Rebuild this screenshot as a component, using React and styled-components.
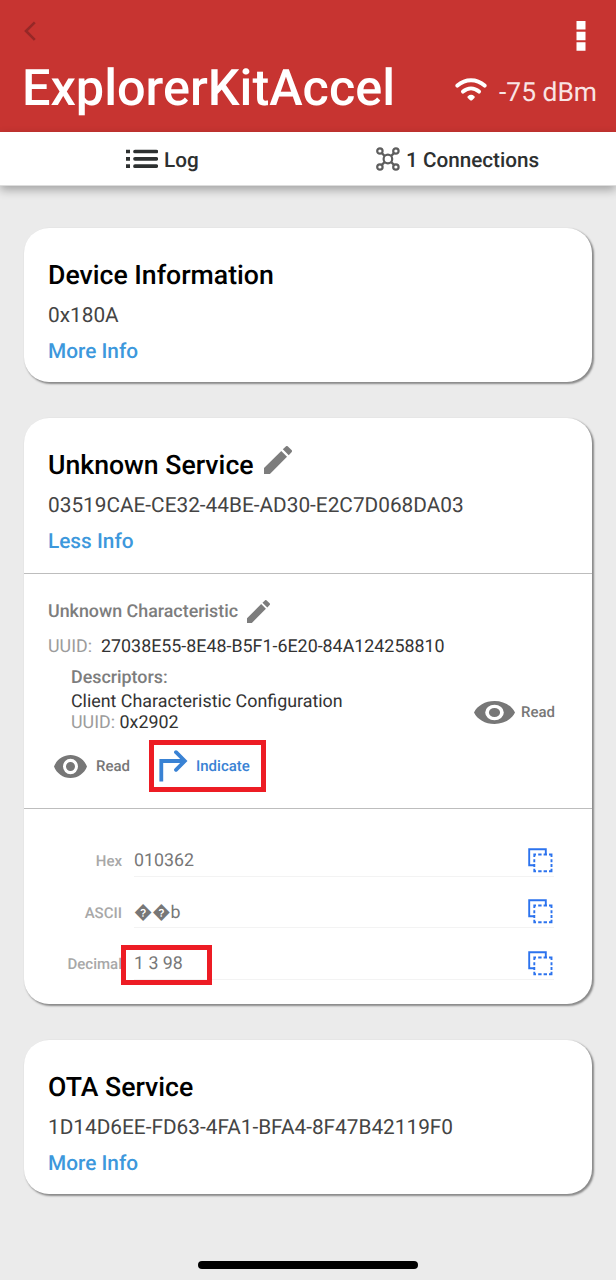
import React from "react";
import styled, { createGlobalStyle } from "styled-components";

const GlobalStyle = createGlobalStyle`
  * { box-sizing: border-box; }
  body {
    margin: 0;
    background: #ebebeb;
    font-family: Roboto, "Liberation Sans", sans-serif;
    text-rendering: geometricPrecision;
  }
  svg { display: block; flex: none; }
`;

const Screen = styled.div`
  width: 616px;
  height: 1280px;
  overflow: hidden;
  display: flex;
  flex-direction: column;
  background: #ebebeb;
`;

const Header = styled.header`
  height: 132px;
  flex: none;
  background: #c73431;
  color: #fff;
`;

const NavRow = styled.div`
  display: flex;
  justify-content: space-between;
  height: 57px;
  padding: 21px 30px 0 24px;
`;

const TitleRow = styled.div`
  display: flex;
  justify-content: space-between;
  height: 62px;
  padding: 0 19px 0 22px;
`;

const DeviceName = styled.h1`
  margin: 0;
  font-size: 50.4px;
  font-weight: 500;
  line-height: 64px;
  white-space: nowrap;
`;

const Signal = styled.div`
  display: flex;
  align-items: flex-start;
  gap: 12px;
  padding-top: 20px;
  font-size: 26.4px;
  line-height: 33px;
  color: #f9e4e4;
  white-space: nowrap;
`;

const Tabs = styled.nav`
  display: flex;
  flex: none;
  height: 54px;
  background: #fff;
  border-bottom: 1px solid #ddd;
  box-shadow: 0 4px 9px rgba(0, 0, 0, 0.3);
`;

const Tab = styled.div`
  width: 308px;
  display: flex;
  align-items: center;
  padding: 1px 0 0 ${(p) => p.$inset}px;
  gap: 6px;
  font-size: 20.7px;
  font-weight: 500;
  color: #2d3030;
  white-space: nowrap;
`;

const TabLabel = styled.span`
  padding-top: 3px;
`;

const ServiceList = styled.main`
  display: flex;
  flex-direction: column;
  gap: 36px;
  padding: 42px 24px 0;
`;

const Card = styled.section`
  background: #fff;
  border-radius: 25px;
  box-shadow: 1.5px 1.5px 2px 0.5px rgba(0, 0, 0, 0.42);
`;

const ServiceHead = styled.div`
  height: ${(p) => (p.$open ? 155 : 154)}px;
  padding: 26px 24px 0;
`;

const ServiceName = styled.h2`
  display: flex;
  gap: 10.5px;
  margin: 0 0 1px;
  font-size: 26.65px;
  font-weight: 500;
  line-height: 42px;
  color: #000;
`;

const ServiceId = styled.div`
  font-size: 20.8px;
  line-height: 38px;
  color: #444;
`;

const InfoLink = styled.div`
  font-size: 20.8px;
  font-weight: 500;
  line-height: 34px;
  color: #3d98dc;
`;

const Characteristic = styled.div`
  height: 235px;
  padding: 20px 24px 0;
  border-top: 1px solid #bdbdbd;
`;

const CharName = styled.div`
  display: flex;
  gap: 9px;
  font-size: 17.85px;
  font-weight: 500;
  line-height: 36px;
  color: #7d7d7d;
`;

const UuidRow = styled.div`
  display: flex;
  gap: ${(p) => p.$gap}px;
  font-size: 17.85px;
  line-height: ${(p) => p.$line}px;
  color: #333;
  white-space: nowrap;
`;

const Muted = styled.span`
  color: #9c9c9c;
`;

const DescriptorRow = styled.div`
  display: flex;
  justify-content: space-between;
  padding: 0 13px 0 23px;
`;

const DescriptorTitle = styled.div`
  font-size: 17.85px;
  font-weight: 500;
  line-height: 27px;
  color: #7d7d7d;
`;

const DescriptorName = styled.div`
  font-size: 17.85px;
  line-height: 22px;
  color: #333;
`;

const ReadSide = styled.div`
  padding-top: 28px;
`;

const Action = styled.div`
  display: flex;
  align-items: center;
  gap: ${(p) => p.$gap}px;
  height: 40px;
  font-size: 15px;
  font-weight: 500;
  color: ${(p) => p.$color || "#777"};
`;

const ActionRow = styled.div`
  display: flex;
  align-items: center;
  gap: 19px;
  padding: 7px 0 0 6px;
`;

const Highlight = styled.div`
  width: 117px;
  height: 52px;
  border: 5px solid #ed1c24;
  padding-left: 5px;
  display: flex;
  align-items: center;
`;

const Values = styled.div`
  height: 195.6px;
  border-top: 1px solid #bdbdbd;
  padding: 16px 38px 0 24px;
`;

const ValueRow = styled.div`
  display: grid;
  grid-template-columns: 74px 1fr;
  column-gap: 12px;
  position: relative;
  height: 51.6px;
`;

const ValueLabel = styled.div`
  text-align: right;
  font-size: 15px;
  font-weight: 500;
  line-height: 72.6px;
  color: #a8a8a8;
`;

const ValueField = styled.div`
  display: flex;
  justify-content: space-between;
  height: 51.6px;
  border-bottom: 1.5px solid #f3f3f3;
  padding-right: 1px;
  font-size: 17.8px;
  line-height: 72.6px;
  color: #777;
`;

const CopySlot = styled.div`
  padding-top: 22.6px;
`;

const ValueHighlight = styled.div`
  position: absolute;
  left: 73px;
  top: 17px;
  width: 91px;
  height: 40px;
  border: 5px solid #ed1c24;
`;

const BottomArea = styled.footer`
  display: flex;
  justify-content: center;
  margin-top: auto;
  padding-bottom: 11px;
`;

const HomeBar = styled.div`
  width: 220px;
  height: 8px;
  border-radius: 4px;
  background: #000;
`;

const BackIcon = () => (
  <svg width="12" height="20" viewBox="0 0 12 20" fill="none" stroke="#962827" strokeWidth="2.6">
    <path d="M10.8 1.3 2 10l8.8 8.8" />
  </svg>
);

const MoreIcon = () => (
  <svg width="10" height="30" viewBox="0 0 10 30" fill="#fff">
    <path d="M.5 0h9v8.5h-9zM.5 10.7h9v8.5h-9zM.5 21.3h9v8.5h-9z" />
  </svg>
);

const WifiIcon = () => (
  <svg width="32" height="26" viewBox="0 0 32 26" fill="none" stroke="#fff" strokeWidth="4" strokeLinecap="round">
    <path d="M2.4 8.6C10.6 1.6 21.4 1.6 29.6 8.6" />
    <path d="M8 14.6c4.9-4.2 11.1-4.2 16 0" />
    <path d="M12.8 19.3a5 5 0 0 1 6.6 0c.6.7.4 1.1 0 1.6l-2 2.1c-.8.8-1.7.8-2.5 0l-2.1-2.1c-.5-.5-.6-1 0-1.6Z" fill="#fff" stroke="none" />
  </svg>
);

const LogIcon = () => (
  <svg width="32" height="20" viewBox="0 0 32 20" stroke="#2d3030" strokeWidth="3.7">
    <path d="M0 2.5h4M0 9.8h4M0 17.2h4" />
    <path d="M9 2.5h21.3M9 9.8h21.3M9 17.2h21.3" strokeLinecap="round" />
  </svg>
);

const ConnectionsIcon = () => (
  <svg width="24" height="24" viewBox="0 0 24 24" fill="none" stroke="#5e5e5e" strokeWidth="2.2">
    <circle cx="11.9" cy="12" r="4.3" />
    <circle cx="3.9" cy="4" r="2.7" />
    <circle cx="19.9" cy="4" r="2.7" />
    <circle cx="3.9" cy="20" r="2.7" />
    <circle cx="19.9" cy="20" r="2.7" />
    <path d="m5.6 5.9 3.2 3.2M18.2 5.9 15 9.1M5.6 18.1l3.2-3.2M18.2 18.1 15 14.9" />
  </svg>
);

const PencilIcon = ({ size, drop }) => (
  <svg width={size} height={size} viewBox="0 0 18 18" fill="#7d7d7d" style={{ marginTop: drop }}>
    <path d="M0 14.2V18h3.8L14.8 6.9l-3.7-3.7zM17.7 4a1 1 0 0 0 0-1.4L15.4.3a1 1 0 0 0-1.4 0l-1.9 1.8 3.8 3.8z" />
  </svg>
);

const EyeIcon = ({ width, height }) => (
  <svg width={width} height={height} viewBox="0 0 22 15" preserveAspectRatio="none" fill="#777">
    <path
      fillRule="evenodd"
      d="M11 0C6 0 1.7 3.1 0 7.5 1.7 11.9 6 15 11 15s9.3-3.1 11-7.5C20.3 3.1 16 0 11 0Zm0 12.5a5 5 0 1 1 0-10 5 5 0 0 1 0 10Zm0-8a3 3 0 1 0 0 6 3 3 0 0 0 0-6Z"
    />
  </svg>
);

const IndicateIcon = () => (
  <svg width="29" height="32" viewBox="0 0 29 32" fill="none" stroke="#3982d4" strokeWidth="3.8">
    <path d="M2.3 31.5V11H25" />
    <path d="M17 2.2 25.8 11 17 19.8" strokeLinecap="round" />
  </svg>
);

const CopyIcon = () => (
  <svg width="25" height="25" viewBox="0 0 25 25" fill="none" stroke="#2c73ee" strokeWidth="1.9">
    <path d="M6 17.3H1.2V1.2h16.6V6" />
    <path d="M6.3 9V6.5H8M6.3 20.8v2.5H8M21 6.5h2.5V9M21 23.3h2.5v-2.5" />
    <path d="M10.2 6.5h3.4M15.6 6.5H19M10.2 23.3h3.4M15.6 23.3H19M6.3 11.2v3M6.3 16v3M23.5 11.2v3M23.5 16v3" />
  </svg>
);

const values = [
  { label: "Hex", value: "010362" },
  { label: "ASCII", value: "\uFFFD\uFFFDb" },
  { label: "Decimal", value: "1 3 98", marked: true },
];

function Service({ name, id, link, editable, children }) {
  return (
    <Card>
      <ServiceHead $open={Boolean(children)}>
        <ServiceName>
          {name}
          {editable && <PencilIcon size={28} drop={1.5} />}
        </ServiceName>
        <ServiceId>{id}</ServiceId>
        <InfoLink>{link}</InfoLink>
      </ServiceHead>
      {children}
    </Card>
  );
}

export default function App() {
  return (
    <Screen>
      <GlobalStyle />
      <Header>
        <NavRow>
          <BackIcon />
          <MoreIcon />
        </NavRow>
        <TitleRow>
          <DeviceName>ExplorerKitAccel</DeviceName>
          <Signal>
            <WifiIcon />
            <span>-75 dBm</span>
          </Signal>
        </TitleRow>
      </Header>
      <Tabs>
        <Tab $inset={126}>
          <LogIcon />
          <TabLabel>Log</TabLabel>
        </Tab>
        <Tab $inset={68}>
          <ConnectionsIcon />
          <TabLabel>1 Connections</TabLabel>
        </Tab>
      </Tabs>
      <ServiceList>
        <Service name="Device Information" id="0x180A" link="More Info" />
        <Service name="Unknown Service" id="03519CAE-CE32-44BE-AD30-E2C7D068DA03" link="Less Info" editable>
          <Characteristic>
            <CharName>
              Unknown Characteristic
              <PencilIcon size={23} drop={5.5} />
            </CharName>
            <UuidRow $gap={9} $line={34}>
              <Muted>UUID:</Muted>
              <span>27038E55-8E48-B5F1-6E20-84A124258810</span>
            </UuidRow>
            <DescriptorRow>
              <div>
                <DescriptorTitle>Descriptors:</DescriptorTitle>
                <DescriptorName>Client Characteristic Configuration</DescriptorName>
                <UuidRow $gap={4.5} $line={20}>
                  <Muted>UUID:</Muted>
                  <span>0x2902</span>
                </UuidRow>
              </div>
              <ReadSide>
                <Action $gap={6}>
                  <EyeIcon width={41} height={23} />
                  Read
                </Action>
              </ReadSide>
            </DescriptorRow>
            <ActionRow>
              <Action $gap={9}>
                <EyeIcon width={33} height={23} />
                Read
              </Action>
              <Highlight>
                <Action $gap={8} $color="#3982d4">
                  <IndicateIcon />
                  Indicate
                </Action>
              </Highlight>
            </ActionRow>
          </Characteristic>
          <Values>
            {values.map((v) => (
              <ValueRow key={v.label}>
                <ValueLabel>{v.label}</ValueLabel>
                <ValueField>
                  <span>{v.value}</span>
                  <CopySlot>
                    <CopyIcon />
                  </CopySlot>
                </ValueField>
                {v.marked && <ValueHighlight />}
              </ValueRow>
            ))}
          </Values>
        </Service>
        <Service name="OTA Service" id="1D14D6EE-FD63-4FA1-BFA4-8F47B42119F0" link="More Info" />
      </ServiceList>
      <BottomArea>
        <HomeBar />
      </BottomArea>
    </Screen>
  );
}
